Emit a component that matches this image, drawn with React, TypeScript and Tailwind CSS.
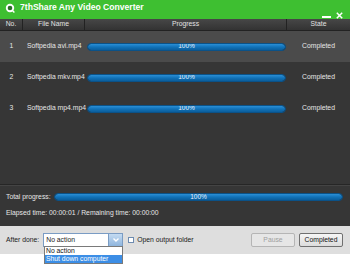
import React from "react";

type Job = { no: number; name: string; progress: number; state: string };

const jobs: Job[] = [
  { no: 1, name: "Softpedia avi.mp4", progress: 100, state: "Completed" },
  { no: 2, name: "Softpedia mkv.mp4", progress: 100, state: "Completed" },
  { no: 3, name: "Softpedia mp4.mp4", progress: 100, state: "Completed" },
];

const Bar = ({ value, className }: { value: number; className: string }) => (
  <div className={`relative rounded-full border border-[#0b5288] bg-[#1d2a36] overflow-hidden ${className}`}>
    <div
      className="h-full rounded-full bg-gradient-to-b from-[#2a8fd6] via-[#1172b8] to-[#0b5e9c]"
      style={{ width: `${value}%` }}
    />
    <span className="absolute inset-0 flex items-center justify-center text-[6.5px] leading-none text-[#e8f0f8]">
      {value}%
    </span>
  </div>
);

const JobRow = ({ job, selected }: { job: Job; selected: boolean }) => (
  <div className={`flex h-[31px] items-center text-[#e6e6e6] ${selected ? "bg-[#4b4b4b]" : ""}`}>
    <span className="w-[23px] text-center">{job.no}</span>
    <span className="w-[62px] pl-[4px] whitespace-nowrap">{job.name}</span>
    <div className="w-[202px] pl-[2px] pr-[1px]">
      <Bar value={job.progress} className="h-[8px] w-full" />
    </div>
    <span className="flex-1 text-center">{job.state}</span>
  </div>
);

const App = () => {
  return (
    <div
      className="w-[350px] h-[271px] bg-white flex flex-col overflow-hidden text-[6.8px]"
      style={{ fontFamily: '"Liberation Sans", Arial, sans-serif' }}
    >
      {/* title bar */}
      <div className="h-[19px] bg-[#3ebf31] flex items-start relative">
        <svg width="10" height="10" viewBox="0 0 10 10" className="ml-[5px] mt-[3px]">
          <circle cx="5" cy="5" r="4.2" fill="#ffffff" />
          <circle cx="5" cy="5" r="2.3" fill="#2b6e27" />
          <path d="M7.2 7.2 L9.4 9.4" stroke="#ffffff" strokeWidth="1.4" />
        </svg>
        <span className="ml-[5px] mt-[2px] text-white font-bold text-[8.6px] leading-[11px]">
          7thShare Any Video Converter
        </span>
        <div className="ml-auto mr-[7px] flex items-end gap-[5px] mt-[12px]">
          <div className="w-[9px] h-[2px] bg-white mb-[1px]" />
          <svg width="7" height="7" viewBox="0 0 7 7">
            <path d="M0.8 0.8 L6.2 6.2 M6.2 0.8 L0.8 6.2" stroke="#ffffff" strokeWidth="1.5" />
          </svg>
        </div>
      </div>

      {/* column header */}
      <div className="h-[12px] flex bg-gradient-to-b from-[#474747] to-[#333333] border-b border-[#222] text-[#e2e2e2]">
        <div className="w-[23px] flex items-center justify-center border-r border-[#222]">No.</div>
        <div className="w-[62px] flex items-center justify-center border-r border-[#222]">File Name</div>
        <div className="w-[202px] flex items-center justify-center border-r border-[#222]">Progress</div>
        <div className="flex-1 flex items-center justify-center">State</div>
      </div>

      {/* list */}
      <div className="h-[154px] bg-[#363636] border-b border-[#262626]">
        {jobs.map((job, i) => (
          <JobRow key={job.no} job={job} selected={i === 0} />
        ))}
      </div>

      {/* totals */}
      <div className="h-[41px] bg-[#363636] border-t border-[#444] text-[#e6e6e6] px-[6px] flex flex-col">
        <div className="flex items-center h-[14px] mt-[4px]">
          <span className="w-[48px] whitespace-nowrap">Total progress:</span>
          <Bar value={100} className="h-[8px] flex-1 ml-[0px] mr-[1px]" />
        </div>
        <div className="mt-[4px] whitespace-nowrap">Elapsed time: 00:00:01 / Remaining time: 00:00:00</div>
      </div>

      {/* bottom bar */}
      <div className="h-[28px] bg-[#dedede] flex items-center pl-[6px] pr-[7px] relative text-[#1a1a1a]">
        <span className="whitespace-nowrap">After done:</span>
        <div className="ml-[4px] w-[80px] h-[14px] bg-white border border-[#7a9cc4] flex">
          <span className="flex-1 pl-[2px] leading-[12px]">No action</span>
          <div className="w-[14px] h-full bg-gradient-to-b from-[#c4dbf2] to-[#8fb5dd] border-l border-[#7a9cc4] flex items-center justify-center">
            <svg width="6" height="4" viewBox="0 0 6 4">
              <path d="M0.5 0.5 L3 3 L5.5 0.5" stroke="#ffffff" strokeWidth="1.4" fill="none" />
            </svg>
          </div>
        </div>
        <div className="ml-[5px] w-[6px] h-[6px] bg-white border border-[#6d8bb0]" />
        <span className="ml-[3px] whitespace-nowrap">Open output folder</span>
        <div className="ml-auto flex gap-[4px]">
          <button className="w-[44px] h-[14px] rounded-[2px] border border-[#b5b5b5] bg-[#e6e6e6] text-[#a0a0a0] leading-none">
            Pause
          </button>
          <button className="w-[44px] h-[14px] rounded-[2px] border border-[#707070] bg-gradient-to-b from-[#f6f6f6] to-[#dcdcdc] text-[#111] leading-none">
            Completed
          </button>
        </div>

        {/* open dropdown list */}
        <div className="absolute left-[44px] top-[20px] w-[79px] bg-white border border-[#7a7a7a] py-[0px] z-10">
          <div className="h-[8px] leading-[8px] pl-[1px] text-[#111]">No action</div>
          <div className="h-[8px] leading-[8px] pl-[1px] bg-[#3c8ee6] text-white whitespace-nowrap">
            Shut down computer
          </div>
        </div>
      </div>

      <div className="flex-1 bg-white" />
    </div>
  );
};

export default App;
